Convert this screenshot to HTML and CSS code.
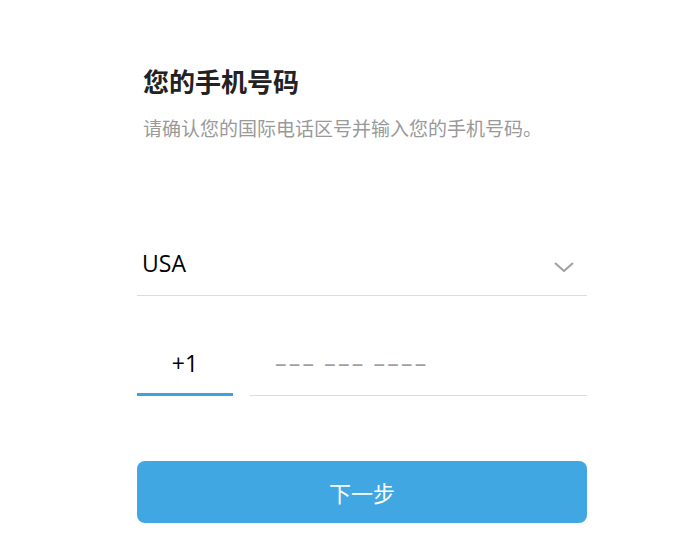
FILE: index.html
```html
<!DOCTYPE html>
<html lang="zh">
<head>
<meta charset="utf-8">
<link rel="stylesheet" href="styles.css">
</head>
<body>
<div class="page">
  <div class="form">
    <h1 class="title">您的手机号码</h1>
    <p class="subtitle">请确认您的国际电话区号并输入您的手机号码。</p>
    <div class="country">
      <span class="country-name">USA</span>
      <svg class="chevron" width="20" height="10" viewBox="0 0 20 10"><path d="M1 1 L10 9 L19 1" fill="none" stroke="#a0a0a0" stroke-width="2"/></svg>
    </div>
    <div class="phone">
      <div class="code">+1</div>
      <div class="number">––– ––– ––––</div>
    </div>
    <button class="next">下一步</button>
  </div>
</div>
</body>
</html>
```
FILE: styles.css
```css
html, body {
  margin: 0;
  padding: 0;
  background: #fff;
}
body {
  font-family: "Open Sans", "Noto Sans CJK SC", sans-serif;
  color: #000;
}
.page {
  display: flex;
  justify-content: center;
  padding-left: 32px;
}
.form {
  width: 450px;
  padding-top: 65px;
}
.title {
  margin: 0 0 0 6px;
  font-size: 26px;
  font-weight: 700;
  line-height: 34px;
  color: #222;
}
.subtitle {
  margin: 16px 0 0 6px;
  font-size: 19px;
  line-height: 28px;
  color: #999;
}
.country {
  margin-top: 105px;
  border-bottom: 1px solid #dcdcdc;
  display: flex;
  align-items: flex-start;
  justify-content: space-between;
  padding: 0 13px 17px 5px;
}
.country-name {
  font-size: 23px;
  line-height: 30px;
}
.chevron {
  display: block;
  margin-top: 14px;
}
.phone {
  margin-top: 40px;
  display: flex;
  gap: 17px;
  align-items: flex-end;
}
.code {
  width: 96px;
  padding: 12px 0 15px;
  border-bottom: 3px solid #3fa3d9;
  text-align: center;
  font-size: 23px;
  line-height: 30px;
}
.number {
  flex: 1;
  padding: 12px 0 17px 25px;
  border-bottom: 1px solid #dcdcdc;
  font-size: 23px;
  line-height: 30px;
  letter-spacing: 2.2px;
  color: #a0a0a0;
}
.next {
  display: block;
  margin-top: 65px;
  width: 100%;
  height: 62px;
  border: none;
  border-radius: 8px;
  background: #40a7e3;
  color: #fff;
  font-family: "Open Sans", "Noto Sans CJK SC", sans-serif;
  font-size: 22px;
}
```
